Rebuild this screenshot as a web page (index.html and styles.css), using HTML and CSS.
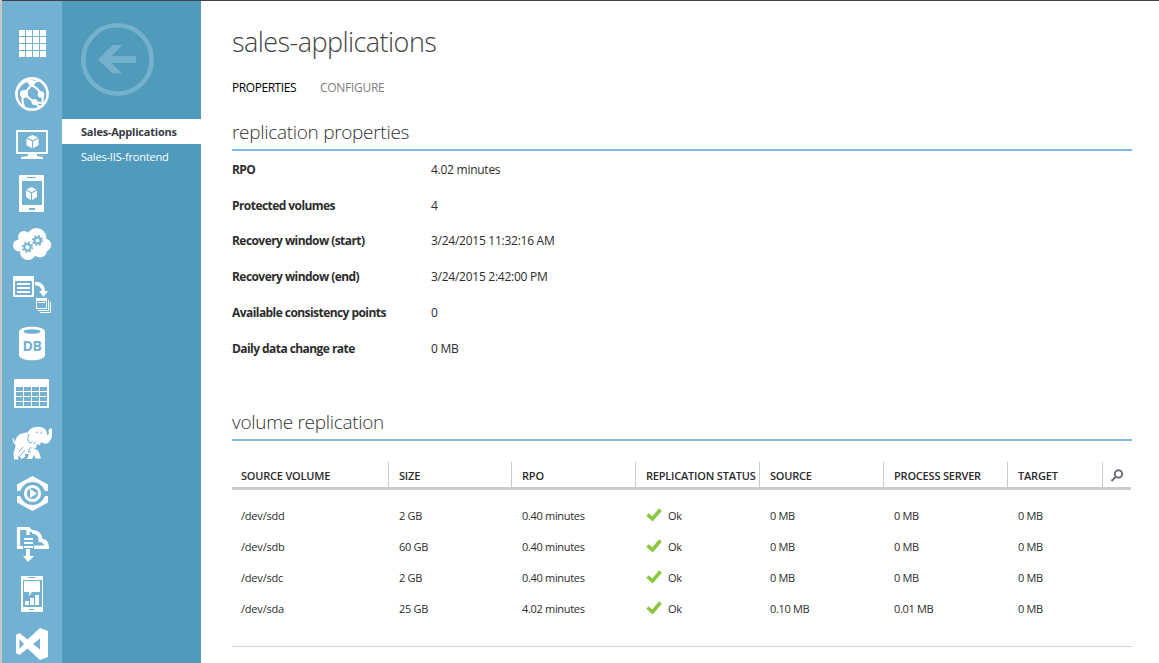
FILE: index.html
```html
<!DOCTYPE html>
<html lang="en">
<head>
<meta charset="utf-8">
<title>sales-applications</title>
<link rel="stylesheet" href="styles.css">
</head>
<body>
<div class="app">
  <nav class="rail">
    <svg class="rail-icon" viewBox="2 19 60 50"><path d="M19 30h6v6h-6zm7 0h6v6h-6zm7 0h6v6h-6zm7 0h6v6h-6zM19 37h6v6h-6zm7 0h6v6h-6zm7 0h6v6h-6zm7 0h6v6h-6zM19 44h6v6h-6zm7 0h6v6h-6zm7 0h6v6h-6zm7 0h6v6h-6zM19 51h6v6h-6zm7 0h6v6h-6zm7 0h6v6h-6zm7 0h6v6h-6z"/></svg>
    <svg class="rail-icon" viewBox="2 69 60 50"><g class="line"><circle cx="32" cy="94" r="15.6" stroke-width="2.6"/><path d="M24 94L33 83L39 80M33 83Q28 81 24 81M31 85Q38 88 41 94M24 94L34 102L41 103M24 94Q21 99 24 107M18 89Q20 84 25 82M41 94Q44 98 42 104M34 102Q38 106 40 107" stroke-width="2.1"/></g><circle cx="24" cy="94" r="4"/><circle cx="41" cy="94.500" r="3.200"/><circle cx="34.500" cy="102" r="3"/><path d="M28 79l8 2-3 6-5-3z"/></svg>
    <svg class="rail-icon" viewBox="2 119 60 50"><path fill-rule="evenodd" d="M17 130h30q1 0 1 1v22q0 1-1 1H17q-1 0-1-1v-22q0-1 1-1zm1 2v20h28v-20z"/><path d="M28 154h9v2l6 1v2H21v-2l7-1z"/><path d="M32.500 135l5.500 2.500-5.500 2.700-5.500-2.700zM26.500 138.500l5.500 2.700v7l-5.500-3zM38.500 138.500l-5.500 2.700v7l5.500-3z"/></svg>
    <svg class="rail-icon" viewBox="2 169 60 50"><path fill-rule="evenodd" d="M20 175h23q1 0 1 1v35q0 1-1 1H20q-1 0-1-1v-35q0-1 1-1zm2 6v24h20v-24zm5-4v1h9v-1zm2 31v2h6v-2z"/><path d="M31.500 187l5 2.500-5 2.700-5-2.700zM26 190.500l5 2.700v6.800l-5-2.900zM37 190.500l-5 2.700v6.800l5-2.900z"/></svg>
    <svg class="rail-icon" viewBox="2 219 60 50"><circle cx="24" cy="237" r="6"/><circle cx="36.500" cy="238" r="10"/><circle cx="19" cy="245.500" r="6"/><circle cx="45" cy="245" r="6.200"/><circle cx="28" cy="252" r="8"/><circle cx="40" cy="250.500" r="7"/><path d="M20 236h25v16H20z"/><g class="gear"><circle cx="27.500" cy="247.200" r="3.200" stroke-width="2"/><circle cx="27.500" cy="247.200" r="4.900" stroke-width="1.700" stroke-dasharray="1.900 1.950"/><circle cx="37.500" cy="240.500" r="3" stroke-width="2"/><circle cx="37.500" cy="240.500" r="4.700" stroke-width="1.700" stroke-dasharray="1.850 1.840"/></g></svg>
    <svg class="rail-icon" viewBox="2 269 60 50"><path fill-rule="evenodd" d="M14 276h19q1 0 1 1v19q0 1-1 1H14q-1 0-1-1v-19q0-1 1-1zm1 5v14h17v-14z"/><path d="M17 283h13v2H17zm0 4h13v2H17zm0 4h13v2H17z"/><path class="line" d="M35 283.500q8 0 8.500 8" stroke-width="3.600"/><path d="M39 291h9l-4.500 6z"/><path fill-rule="evenodd" d="M36 298h11v11H36zm1 3v7h9v-7z"/><path class="line" d="M38 302.500h7M48.500 300v10.500H38M50.500 302v10.500H40" stroke-width="1"/></svg>
    <svg class="rail-icon" viewBox="2 319 60 50"><path d="M19 332c0-7 26-7 26 0v23c0 7-26 7-26 0z"/><ellipse class="hole" cx="32" cy="331.500" rx="8.500" ry="2.300"/><text class="db" x="32" y="351" text-anchor="middle">DB</text></svg>
    <svg class="rail-icon" viewBox="2 369 60 50"><path fill-rule="evenodd" d="M15 379h33q1 0 1 1v27q0 1-1 1H15q-1 0-1-1v-27q0-1 1-1zm1 8v4h7v-4zm8 0v4h7v-4zm8 0v4h7v-4zm8 0v4h7v-4zm-24 5v4h7v-4zm8 0v4h7v-4zm8 0v4h7v-4zm8 0v4h7v-4zm-24 5v4h7v-4zm8 0v4h7v-4zm8 0v4h7v-4zm8 0v4h7v-4zm-24 5v4h7v-4zm8 0v4h7v-4zm8 0v4h7v-4zm8 0v4h7v-4z"/></svg>
    <svg class="rail-icon" viewBox="2 419 60 50"><path d="M12.500 439Q13 436 14 440L15 442Q16 435 22 433.500L28 432Q30 428 35 427Q41 426 45 429Q47 431 47 435L49 434L48.500 430Q50 427 52 429V434Q52 440 48 443Q45 445 41 442L40 445L37 444L36 448L33 449Q37 449 38.500 451L41 458.500H35.500L34 455L32 459H27L29 454L25 454L25 457L20.500 459.500L21 457L18 456L18.500 459.500H14L13.500 453L15 448L15.500 445Q13 443 12.500 439Z"/><path class="cut" d="M29 434Q26.500 439 28.500 442Q31 444 32.500 441.500M36 432.500L38 432M41 431.500V434M33 444L36 442M19 452L23 447M25 450L20 456M31 447L28 452L31 452"/></svg>
    <svg class="rail-icon" viewBox="2 469 60 50"><path d="M32.500 476L48 484.500V491h-3q-4-9-12.500-9t-12.500 9h-3v-6.500zM32.500 511L48 502.500V496h-3q-4 9-12.500 9t-12.500-9h-3v6.500z"/><circle class="line" cx="32.500" cy="493.500" r="7.100" stroke-width="3"/><path d="M30 489l7 4.500-7 4.500z"/></svg>
    <svg class="rail-icon" viewBox="2 519 60 50"><path class="line" d="M23 547.500h-4.500v-19H28v6.500" stroke-width="3.200"/><path d="M29 527l5 5h-5zM32 530c7 0 10 4 10.500 9 4 0 6.500 3 6.500 9v1H34v-3.500h10q0-3.500-5.500-3.500v-4q-1-4-6.500-4.500zM24 538h9v2h-9zm0 4h9v2h-9zm0 4h9v2h-9zM26 549h4v7h4l-6 6-5-6h3z"/></svg>
    <svg class="rail-icon" viewBox="2 569 60 50"><path fill-rule="evenodd" d="M22 576h20q1 0 1 1v34q0 1-1 1H22q-1 0-1-1v-34q0-1 1-1zm1 4v27h19v-27zm5-3v1h7v-1zm1 32v1h5v-1z"/><path d="M25 581h14q1 0 1 1v9q0 1-1 1h-7l-3 4v-4h-4q-1 0-1-1v-9q0-1 1-1zM25 601h4v4h-4zm5-3h4v7h-4zm5-3h4v10h-4z"/></svg>
    <svg class="rail-icon" viewBox="2 619 60 50"><path fill-rule="evenodd" d="M40 628l8 3v26l-8 3-12.500-11.500-8 6.500-3.500-2v-18l3.500-2 8 6.500zm0 10.500l-7 5.500 7 5.500zM19.500 639v10l4.500-5z"/></svg>
  </nav>
  <aside class="side">
    <svg class="back" viewBox="0 0 74 74"><circle cx="36.500" cy="36.500" r="34.200"/><path d="M17 36.500L31.500 22H41L30.500 33H55v7H30.500L41 50.500H31.500z"/></svg>
    <a class="side-item on">Sales-Applications</a>
    <a class="side-item">Sales-IIS-frontend</a>
  </aside>
  <main class="main">
    <h1>sales-applications</h1>
    <div class="tabs"><span class="active">PROPERTIES</span><span>CONFIGURE</span></div>
    <h2>replication properties</h2>
    <dl class="props">
      <dt>RPO</dt><dd>4.02 minutes</dd>
      <dt>Protected volumes</dt><dd>4</dd>
      <dt>Recovery window (start)</dt><dd>3/24/2015 11:32:16 AM</dd>
      <dt>Recovery window (end)</dt><dd>3/24/2015 2:42:00 PM</dd>
      <dt>Available consistency points</dt><dd>0</dd>
      <dt>Daily data change rate</dt><dd>0 MB</dd>
    </dl>
    <h2>volume replication</h2>
    <div class="grid head"><span>SOURCE VOLUME</span><span>SIZE</span><span>RPO</span><span>REPLICATION STATUS</span><span>SOURCE</span><span>PROCESS SERVER</span><span>TARGET</span><span class="search"><svg viewBox="0 0 14 14"><circle cx="8.500" cy="5" r="3.700"/><path d="M5.800 7.700L1.500 12"/></svg></span></div>
    <div class="rows">
      <div class="grid"><span>/dev/sdd</span><span>2 GB</span><span>0.40 minutes</span><span class="ok"><svg viewBox="0 0 16 14"><path d="M1.500 6.500L6.500 11 14.500 1.500"/></svg>Ok</span><span>0 MB</span><span>0 MB</span><span>0 MB</span></div>
      <div class="grid"><span>/dev/sdb</span><span>60 GB</span><span>0.40 minutes</span><span class="ok"><svg viewBox="0 0 16 14"><path d="M1.500 6.500L6.500 11 14.500 1.500"/></svg>Ok</span><span>0 MB</span><span>0 MB</span><span>0 MB</span></div>
      <div class="grid"><span>/dev/sdc</span><span>2 GB</span><span>0.40 minutes</span><span class="ok"><svg viewBox="0 0 16 14"><path d="M1.500 6.500L6.500 11 14.500 1.500"/></svg>Ok</span><span>0 MB</span><span>0 MB</span><span>0 MB</span></div>
      <div class="grid"><span>/dev/sda</span><span>25 GB</span><span>4.02 minutes</span><span class="ok"><svg viewBox="0 0 16 14"><path d="M1.500 6.500L6.500 11 14.500 1.500"/></svg>Ok</span><span>0.10 MB</span><span>0.01 MB</span><span>0 MB</span></div>
    </div>
  </main>
</div>
</body>
</html>
```
FILE: styles.css
```css
* { box-sizing: border-box; }
body { margin: 0; font-family: "Open Sans", "Noto Sans", sans-serif; font-size: 11px; color: #2c2c2c; background: #fff; }
.app { display: flex; height: 663px; overflow: hidden; border-left: 2px solid #c9c9c7; }
.rail { width: 60px; flex: none; background: #72b1d2; border-top: 1px solid #40404c; padding-top: 18px; }
.rail-icon { display: block; width: 60px; height: 50px; fill: #fff; }
.rail .line { fill: none; stroke: #fff; }
.rail .gear { fill: none; stroke: #72b1d2; }
.rail .hole { fill: #72b1d2; }
.rail .cut { fill: none; stroke: #72b1d2; stroke-width: 1; }
.rail .db { fill: #72b1d2; font-size: 14px; font-weight: 700; letter-spacing: -0.3px; }
.side { width: 139px; flex: none; background: #509bbc; border-top: 1px solid #40404c; padding-top: 22px; }
.back { display: block; width: 74px; height: 74px; margin: 0 0 22px 19px; fill: #75b0cd; }
.back circle { fill: none; stroke: #75b0cd; stroke-width: 4.6; }
.side-item { display: block; height: 25px; line-height: 26px; padding-left: 19px; color: #fff; letter-spacing: -0.17px; white-space: nowrap; }
.side-item.on { background: #fff; color: #363c46; font-weight: 700; letter-spacing: -0.22px; }
.main { flex: 1; border-top: 1px solid #40404c; padding: 0 27px 0 31px; }
h1 { margin: 0; padding-top: 22px; height: 76px; font-size: 27px; line-height: 38px; font-weight: 300; letter-spacing: -0.56px; color: #444; }
.tabs { display: flex; gap: 24px; height: 42px; line-height: 21px; font-size: 12px; letter-spacing: -0.3px; color: #808080; }
.tabs .active { color: #000; letter-spacing: -0.44px; }
h2 { margin: 0; padding-top: 1px; height: 32px; font-size: 19px; line-height: 25px; font-weight: 300; letter-spacing: -0.3px; color: #333; border-bottom: 2px solid #85b7e3; }
.props { display: grid; grid-template-columns: 199px 1fr; grid-template-rows: 36px 35px 36px 36px 36px 36px; align-content: start; margin: 0; height: 258px; line-height: 37px; font-size: 12px; letter-spacing: -0.26px; }
.props dt { font-weight: 700; letter-spacing: -0.56px; }
.props dd { margin: 0; }
.grid { display: grid; grid-template-columns: 156px 123px 124px 124px 124px 124px 95px 29px; width: 899px; line-height: 31px; letter-spacing: -0.32px; white-space: nowrap; }
.grid > span { padding-left: 10px; border-left: 1px solid transparent; }
.grid > span:first-child { padding-left: 9px; border-left: 0; letter-spacing: -0.2px; }
.head { margin-top: 21px; height: 28px; line-height: 28px; font-weight: 600; letter-spacing: -0.2px; border-bottom: 3px solid #ccc; }
.head > span { border-left-color: #ccc; }
.head > .search { padding: 7px 0 0 7px; line-height: 0; }
.search svg { width: 14px; height: 14px; fill: none; stroke: #6c7075; stroke-width: 2; }
.rows { height: 157px; padding-top: 10px; border-bottom: 1px solid #d5d5d5; }
.ok svg { width: 16px; height: 14px; margin-right: 6px; vertical-align: -2px; fill: none; stroke: #8bc63f; stroke-width: 3.6; }
```
